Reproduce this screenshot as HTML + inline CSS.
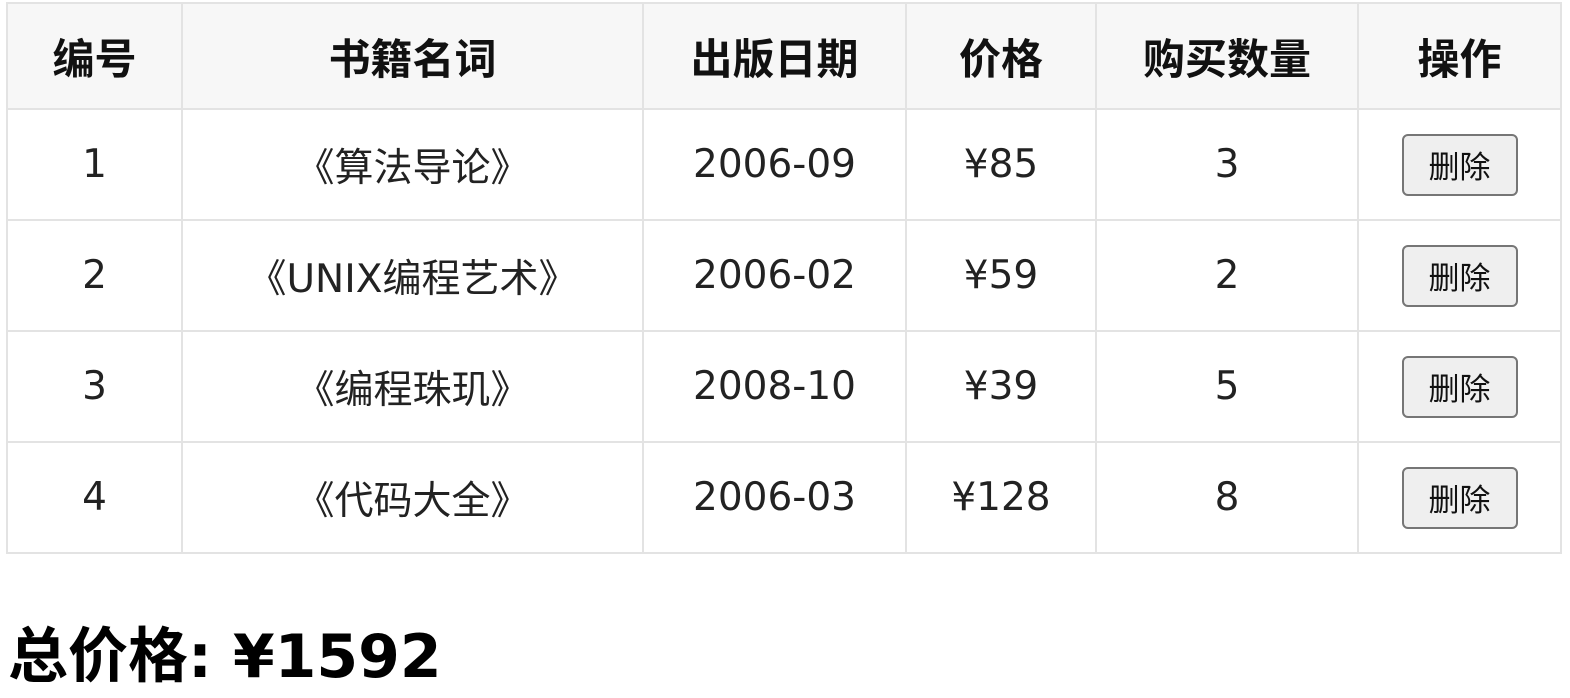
<!DOCTYPE html>
<html><head><meta charset="utf-8"><style>
body{margin:0;background:#fff;font-family:"DejaVu Sans","Noto Sans CJK SC",sans-serif;color:#222;}
table{position:absolute;left:6px;top:2px;border-collapse:collapse;border:2px solid #e3e3e3;}
td,th{border:2px solid #e3e3e3;text-align:center;font-size:39px;padding:0;}
th{background:#f7f7f7;height:104px;font-weight:bold;color:#111;font-size:42px;}
td{height:109px;}
button{font-family:"Liberation Sans","Noto Sans CJK SC",sans-serif;font-size:31px;width:116px;height:62px;background:#efefef;border:2px solid #767676;border-radius:6px;color:#111;padding:0;}
.total{position:absolute;left:8px;top:608px;font-size:60px;font-weight:bold;color:#000;margin:0;}
</style></head><body>
<table>
<tr><th style="width:173px">编号</th><th style="width:459px">书籍名词</th><th style="width:261px">出版日期</th><th style="width:188px">价格</th><th style="width:260px">购买数量</th><th style="width:201px">操作</th></tr>
<tr><td>1</td><td>《算法导论》</td><td>2006-09</td><td>¥85</td><td>3</td><td><button>删除</button></td></tr>
<tr><td>2</td><td>《UNIX编程艺术》</td><td>2006-02</td><td>¥59</td><td>2</td><td><button>删除</button></td></tr>
<tr><td>3</td><td>《编程珠玑》</td><td>2008-10</td><td>¥39</td><td>5</td><td><button>删除</button></td></tr>
<tr><td>4</td><td>《代码大全》</td><td>2006-03</td><td>¥128</td><td>8</td><td><button>删除</button></td></tr>
</table>
<div class="total">总价格: ¥1592</div>
</body></html>
